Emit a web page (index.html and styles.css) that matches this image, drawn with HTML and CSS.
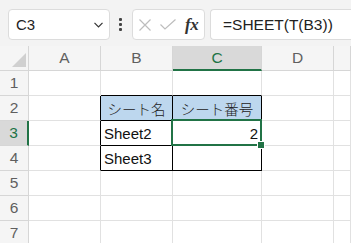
FILE: index.html
```html
<!DOCTYPE html>
<html lang="ja">
<head>
<meta charset="utf-8">
<link rel="stylesheet" href="styles.css">
</head>
<body>
<div class="toolbar">
  <div class="namebox">
    <span class="ref">C3</span>
    <svg class="chev" width="9" height="6" viewBox="0 0 9 6"><path d="M0.5 0.8 L4.5 4.8 L8.5 0.8" fill="none" stroke="#333" stroke-width="1.2"/></svg>
  </div>
  <div class="dots"><i></i><i></i><i></i></div>
  <div class="fbtns">
    <svg width="12" height="12" viewBox="0 0 12 12"><path d="M0.5 0.5 L11.5 11.5 M11.5 0.5 L0.5 11.5" stroke="#bdbdbd" stroke-width="1.2" fill="none"/></svg>
    <svg width="16" height="11" viewBox="0 0 16 11"><path d="M0.5 5.5 L5 10 L15.5 0.5" stroke="#bdbdbd" stroke-width="1.2" fill="none"/></svg>
    <span class="fx">fx</span>
  </div>
  <div class="formula">=SHEET(T(B3))</div>
</div>
<div class="sheet">
  <div class="corner"><span class="tri"></span></div>
  <div class="ch">A</div>
  <div class="ch">B</div>
  <div class="ch sel">C</div>
  <div class="ch">D</div>
  <div class="ch"></div>

  <div class="rh">1</div>
  <div class="c"></div>
  <div class="c bb"></div>
  <div class="c bb"></div>
  <div class="c"></div>
  <div class="c"></div>

  <div class="rh">2</div>
  <div class="c br"></div>
  <div class="c t hd">シート名</div>
  <div class="c t hd">シート番号</div>
  <div class="c"></div>
  <div class="c"></div>

  <div class="rh sel">3</div>
  <div class="c br"></div>
  <div class="c t">Sheet2</div>
  <div class="c t num active">2</div>
  <div class="c"></div>
  <div class="c"></div>

  <div class="rh">4</div>
  <div class="c br"></div>
  <div class="c t">Sheet3</div>
  <div class="c t"></div>
  <div class="c"></div>
  <div class="c"></div>

  <div class="rh">5</div>
  <div class="c"></div><div class="c"></div><div class="c"></div><div class="c"></div><div class="c"></div>
  <div class="rh">6</div>
  <div class="c"></div><div class="c"></div><div class="c"></div><div class="c"></div><div class="c"></div>
  <div class="rh">7</div>
  <div class="c"></div><div class="c"></div><div class="c"></div><div class="c"></div><div class="c"></div>
</div>
</body>
</html>
```
FILE: styles.css
```css
* { box-sizing: border-box; }
html, body { margin: 0; padding: 0; background: #fff; }
body {
  width: 351px;
  height: 243px;
  overflow: hidden;
  font-family: "Liberation Sans", "Noto Sans CJK JP", sans-serif;
  color: #222;
}
.toolbar {
  height: 46px;
  background: #f3f3f3;
  display: flex;
  align-items: flex-start;
  padding: 9px 0 0 8px;
}
.namebox {
  width: 102px;
  height: 31px;
  background: #fff;
  border: 1px solid #dcdcdc;
  border-radius: 4px;
  display: flex;
  align-items: center;
  justify-content: space-between;
  padding: 0 6px 0 7px;
  font-size: 15px;
  color: #222;
}
.chev { margin-top: 1px; }
.dots {
  margin-left: 9px;
  width: 3px;
  height: 31px;
  display: flex;
  flex-direction: column;
  justify-content: center;
  gap: 2px;
}
.dots i {
  display: block;
  width: 3px;
  height: 3px;
  background: #444;
  border-radius: 1px;
}
.fbtns {
  margin-left: 10px;
  width: 73px;
  height: 31px;
  background: #fff;
  border: 1px solid #dcdcdc;
  border-radius: 4px;
  display: flex;
  align-items: center;
  padding-left: 6px;
  gap: 9px;
}
.fx {
  font-family: "Liberation Serif", "DejaVu Serif", serif;
  font-style: italic;
  font-weight: bold;
  font-size: 17px;
  color: #333;
  letter-spacing: -0.5px;
}
.formula {
  margin-left: 5px;
  flex: 1;
  height: 31px;
  background: #fff;
  border: 1px solid #dcdcdc;
  border-right: none;
  border-radius: 4px 0 0 4px;
  font-size: 15.5px;
  line-height: 29px;
  padding-left: 12px;
  color: #222;
  white-space: nowrap;
}
.sheet {
  display: grid;
  grid-template-columns: 29px 72px 72px 89px 72px 1fr;
  grid-template-rows: 25px repeat(7, 25px);
  font-size: 15px;
}
.corner, .ch, .rh {
  background: #f5f5f5;
  color: #5f5f5f;
  border-right: 1px solid #d6d6d6;
  border-bottom: 1px solid #d6d6d6;
  display: flex;
  align-items: center;
  justify-content: center;
  font-size: 15.5px;
}
.corner { position: relative; }
.tri {
  position: absolute;
  right: 2px;
  bottom: 3px;
  width: 0;
  height: 0;
  border-left: 14px solid transparent;
  border-bottom: 14px solid #d0d0d0;
}
.ch.sel {
  background: #d9d9d9;
  color: #217346;
  border-bottom: 2px solid #217346;
}
.rh.sel {
  background: #d9d9d9;
  color: #217346;
  border-right: 2px solid #217346;
}
.c {
  border-right: 1px solid #e1e1e1;
  border-bottom: 1px solid #e1e1e1;
  display: flex;
  align-items: center;
  padding: 0 3px;
  white-space: nowrap;
  color: #111;
}
.c.bb { border-bottom-color: #000; }
.c.br { border-right-color: #000; }
.c.t {
  border-right-color: #000;
  border-bottom-color: #000;
}
.c.hd {
  background: #bdd7ee;
  justify-content: center;
  font-size: 14.5px;
  font-weight: 300;
  color: #222;
}
.c.num { justify-content: flex-end; padding-right: 3px; }
.c.active { position: relative; }
.c.active::after {
  content: "";
  position: absolute;
  left: -2px;
  top: -2px;
  right: -1px;
  bottom: -1px;
  border: 2px solid #217346;
  pointer-events: none;
}
.c.active::before {
  content: "";
  position: absolute;
  right: -4px;
  bottom: -4px;
  width: 6px;
  height: 6px;
  background: #217346;
  border: 1px solid #fff;
  z-index: 2;
}
```
